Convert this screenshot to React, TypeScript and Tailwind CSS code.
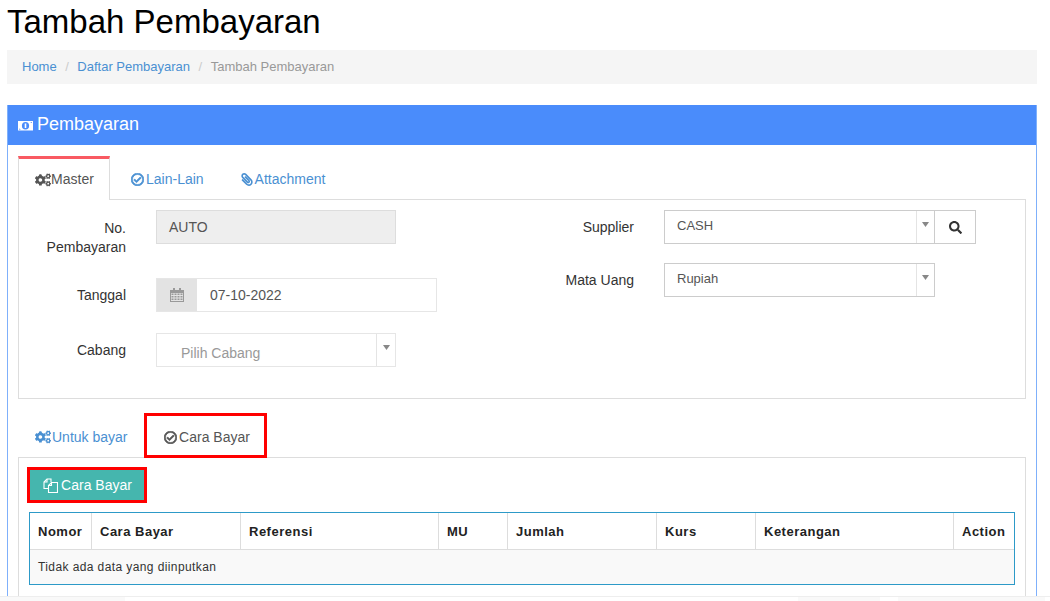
import React from "react";
import { FaCogs, FaRegCheckCircle, FaPaperclip, FaSearch } from "react-icons/fa";

const Arrow = ({ w = "w-[19px]" }: { w?: string }) => (
  <span className={`flex ${w} shrink-0 justify-center border-l border-[#e4e4e4] pt-[11px] text-[#888]`}>
    <svg width="7" height="5" viewBox="0 0 7 5"><path d="M0 0h7L3.5 5z" fill="currentColor" /></svg>
  </span>
);

const Label = ({ children, w }: { children: React.ReactNode; w: string }) => (
  <div className={`${w} shrink-0 text-right text-[14px] leading-[20px] text-[#333]`}>{children}</div>
);

const Money = () => (
  <svg width="15" height="11" viewBox="0 0 15 11" className="mt-[2px]">
    <path d="M0 1h15v9.5H0z" fill="#fff" />
    <ellipse cx="7.5" cy="5.75" rx="3.6" ry="3.8" fill="#4a8cfb" />
    <path d="M6.7 3.5h1.6v4.5H6.7z" fill="#fff" />
    <path d="M1 8.5l2 1H1zM14 3l-2-1h2z" fill="#4a8cfb" />
  </svg>
);

const Files = () => (
  <svg width="15" height="15" viewBox="0 0 15 15" fill="none" stroke="currentColor" strokeWidth="1.1">
    <path d="M5.5 10.5H1V4l3-3h4v3" />
    <path d="M1 4h3V1" />
    <path d="M5.5 14.5V7.5l3-3h6v10z" />
    <path d="M5.5 7.5h3v-3" />
  </svg>
);

const Calendar = () => (
  <svg width="14" height="14" viewBox="0 0 14 14">
    <path d="M0 2h14v12H0z" fill="#999" />
    <path d="M3 0h2v3H3zM9 0h2v3H9z" fill="#999" />
    <path d="M1 5h12v8H1z" fill="#e3e3e3" />
    <path d="M1.5 5.5h2v1.5h-2zM4.5 5.5h2v1.5h-2zM7.5 5.5h2v1.5h-2zM10.5 5.5h2v1.5h-2zM1.5 8h2v1.5h-2zM4.5 8h2v1.5h-2zM7.5 8h2v1.5h-2zM10.5 8h2v1.5h-2zM1.5 10.5h2V12h-2zM4.5 10.5h2V12h-2zM7.5 10.5h2V12h-2zM10.5 10.5h2V12h-2z" fill="#999" />
  </svg>
);

const cols: [string, string][] = [
  ["Nomor", "w-[62px]"],
  ["Cara Bayar", "w-[149px]"],
  ["Referensi", "w-[198px]"],
  ["MU", "w-[69px]"],
  ["Jumlah", "w-[149px]"],
  ["Kurs", "w-[99px]"],
  ["Keterangan", "w-[198px]"],
  ["Action", "flex-1"],
];

export default function App() {
  return (
    <div className="h-[601px] w-[1050px] overflow-hidden bg-white font-['Liberation_Sans',Arial,sans-serif] text-[14px] text-[#333]">
      <div className="px-[7px]">
        <h1 className="pt-[2px] text-[33px] leading-[40px] text-black">Tambah Pembayaran</h1>
        <nav className="mt-[8px] flex h-[34px] w-[1030px] items-center bg-[#f5f5f5] pl-[15px] text-[13px]">
          <span className="text-[#4a90d2]">Home</span>
          <span className="mx-[8.5px] text-[#ccc]">/</span>
          <span className="text-[#4a90d2]">Daftar Pembayaran</span>
          <span className="mx-[8.5px] text-[#ccc]">/</span>
          <span className="text-[#999]">Tambah Pembayaran</span>
        </nav>

        <section className="mt-[21px] h-[491px] w-[1030px] overflow-hidden border-x border-[#7fb0fb]">
          <header className="mx-[-1px] flex h-[40px] items-center gap-[4px] bg-[#4a8cfb] pb-[2px] pl-[11px] text-[18px] text-white">
            <Money />
            <span>Pembayaran</span>
          </header>

          <div className="px-[10px] pt-[11px]">
            <div className="flex h-[43px] text-[14px]">
              <div className="relative z-10 flex h-[44px] w-[92px] items-center justify-center border-x border-[#ddd] border-t-[3px] border-t-[#f95a62] bg-white pl-[1px] text-[#555]">
                <FaCogs className="h-[16px] w-[16px]" />
                <span>Master</span>
              </div>
              <div className="ml-[21px] flex items-center gap-[2px] pt-[3px] text-[#4a90d2]">
                <FaRegCheckCircle className="h-[13px] w-[13px] stroke-current stroke-[30px]" />
                <span>Lain-Lain</span>
              </div>
              <div className="ml-[37px] flex items-center gap-[2px] pt-[3px] text-[#4a90d2]">
                <FaPaperclip className="h-[13px] w-[12px] -scale-x-100" />
                <span>Attachment</span>
              </div>
            </div>

            <div className="flex h-[200px] w-[1008px] border border-[#ddd] pt-[10px]">
              <div className="w-[418px] shrink-0">
                <div className="flex h-[68px] gap-[30px]">
                  <Label w="w-[107px]"><div className="pt-[8px]">No.</div><div className="-mt-[1px]">Pembayaran</div></Label>
                  <div className="flex h-[34px] w-[240px] items-center border border-[#ddd] bg-[#eeeeee] pl-[12px] text-[#555]">AUTO</div>
                </div>
                <div className="flex h-[55px] gap-[30px]">
                  <Label w="w-[107px]"><div className="pt-[7px]">Tanggal</div></Label>
                  <div className="flex h-[34px] w-[281px] border border-[#e6e6e6]">
                    <span className="flex w-[40px] items-center justify-center bg-[#e3e3e3]"><Calendar /></span>
                    <span className="flex items-center pl-[13px] text-[#555]">07-10-2022</span>
                  </div>
                </div>
                <div className="flex gap-[30px]">
                  <Label w="w-[107px]"><div className="pt-[7px]">Cabang</div></Label>
                  <div className="flex h-[34px] w-[240px] border border-[#e6e6e6]">
                    <span className="flex flex-1 items-center pl-[24px] pt-[7px] text-[#999]">Pilih Cabang</span>
                    <Arrow />
                  </div>
                </div>
              </div>
              <div className="flex-1">
                <div className="flex h-[53px] gap-[30px]">
                  <Label w="w-[197px]"><div className="pt-[7px]">Supplier</div></Label>
                  <div className="flex h-[34px]">
                    <div className="flex w-[271px] border border-[#ccc]">
                      <span className="flex flex-1 items-center pb-[3px] pl-[12px] text-[13px] text-[#555]">CASH</span>
                      <Arrow w="w-[18px]" />
                    </div>
                    <div className="flex w-[41px] items-center justify-center border border-l-0 border-[#ccc] text-[#333]">
                      <FaSearch className="h-[13px] w-[13px]" />
                    </div>
                  </div>
                </div>
                <div className="flex gap-[30px]">
                  <Label w="w-[197px]"><div className="pt-[7px]">Mata Uang</div></Label>
                  <div className="flex h-[34px] w-[271px] border border-[#ccc]">
                    <span className="flex flex-1 items-center pb-[3px] pl-[12px] text-[13px] text-[#555]">Rupiah</span>
                    <Arrow w="w-[18px]" />
                  </div>
                </div>
              </div>
            </div>

            <div className="mt-[14px] flex h-[44px] w-[249px] items-start">
              <div className="mt-[4px] flex h-[40px] w-[126px] shrink-0 items-center gap-[1px] pl-[17px] text-[#4a90d2]">
                <FaCogs className="h-[16px] w-[16px]" />
                <span>Untuk bayar</span>
              </div>
              <div className="relative z-10 flex h-[45px] w-[123px] shrink-0 items-center justify-center gap-[2px] border-[3px] border-[#ff0000] bg-white pl-[3px] pt-[3px] text-[#555]">
                <FaRegCheckCircle className="h-[13px] w-[13px] stroke-current stroke-[30px]" />
                <span>Cara Bayar</span>
              </div>
            </div>

            <div className="h-[140px] w-[1008px] border-x border-[#ddd] pl-[8px]">
              <div className="-ml-[9px] -mr-[1px] border-t border-[#ddd]" />
              <div className="pt-[9px]">
                <div className="flex h-[36px] w-[120px] items-center justify-center gap-[3px] border-[3px] border-[#ff0000] bg-[#45b6ae] pl-[1px] text-white">
                  <Files />
                  <span>Cara Bayar</span>
                </div>
                <div className="ml-[2px] mt-[9px] h-[73px] w-[986px] border border-[#2d9ac8] text-[13px]">
                  <div className="flex h-[37px] border-b border-[#ddd]">
                    {cols.map(([t, w], i) => (
                      <div key={t} className={`${w} flex items-center pl-[8px] pt-[1px] text-[13px] font-bold tracking-[0.5px] text-[#222] ${i < 7 ? "border-r border-[#ddd]" : ""}`}>{t}</div>
                    ))}
                  </div>
                  <div className="flex h-[34px] items-center bg-[#f9f9f9] pl-[8px] text-[12px] tracking-[0.4px] text-[#333]">Tidak ada data yang diinputkan</div>
                </div>
              </div>
            </div>
          </div>
        </section>
      </div>
      <div className="h-[1px] bg-[#eeeeee]" />
      <div className="flex h-[4px] justify-between bg-white">
        <div className="w-[125px] bg-[#f9f9f9]" />
        <div className="mr-[5px] flex gap-[18px]">
          <div className="w-[82px] bg-[#f9f9f9]" />
          <div className="w-[147px] bg-[#f9f9f9]" />
        </div>
      </div>
    </div>
  );
}
